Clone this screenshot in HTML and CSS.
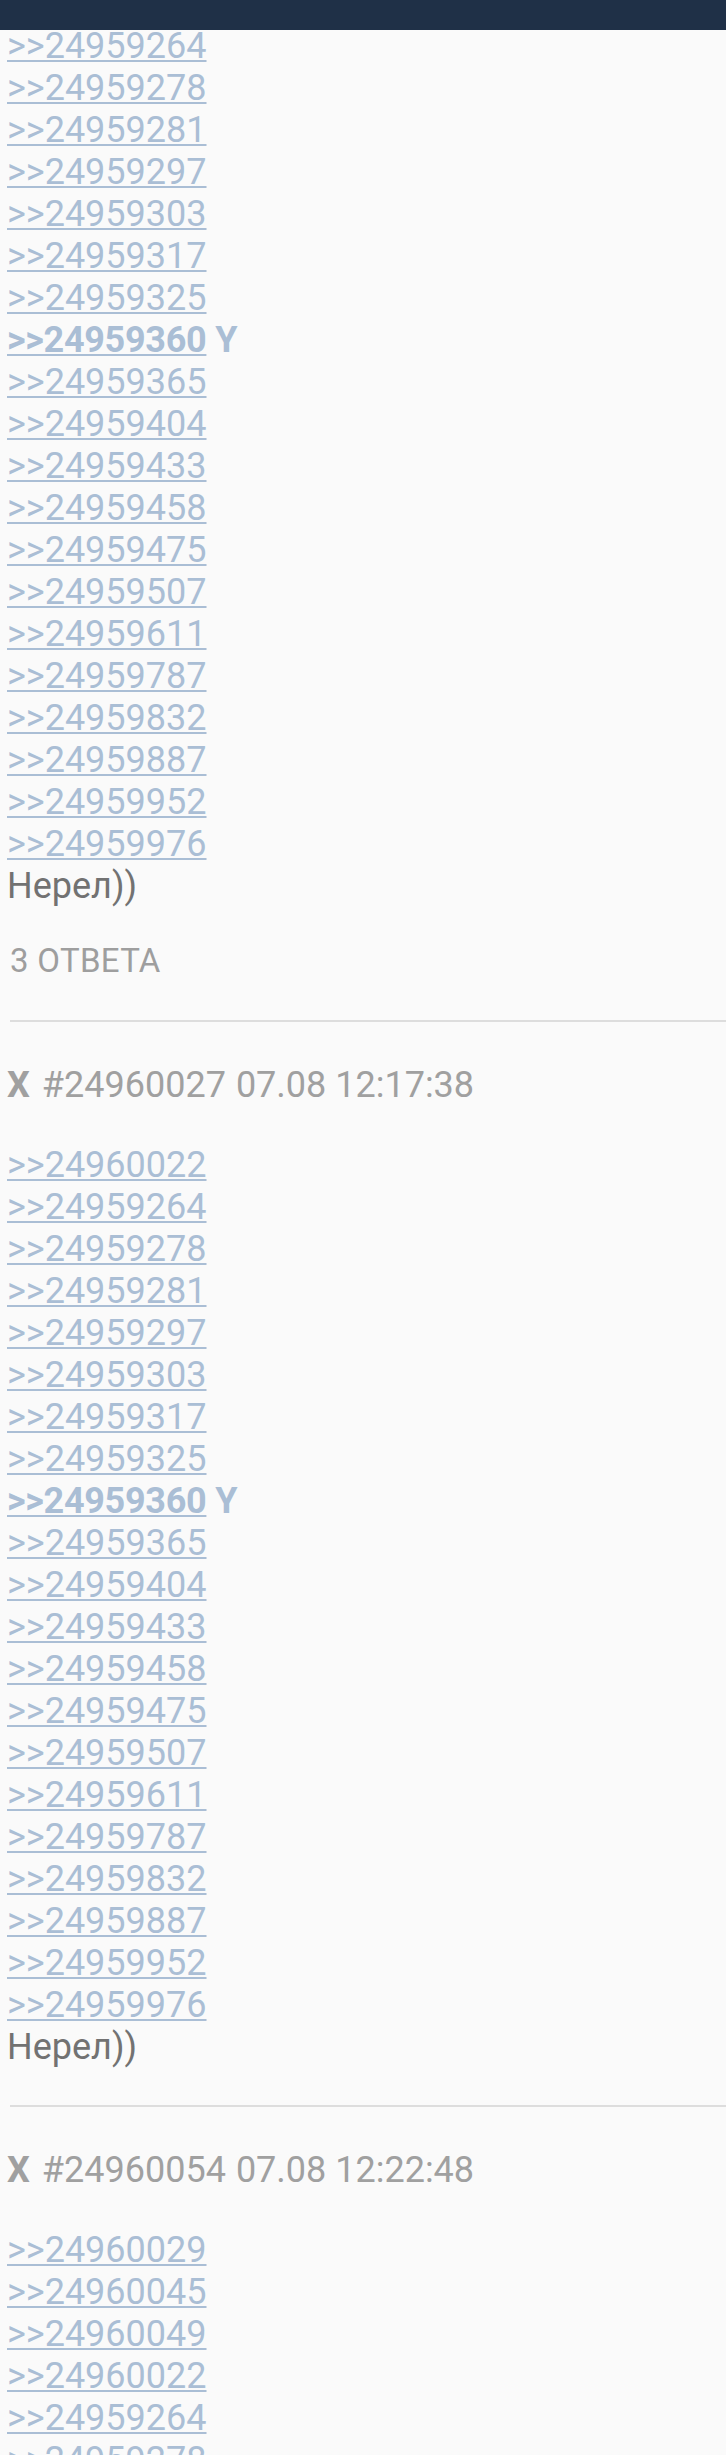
FILE: index.html
```html
<!DOCTYPE html>
<html lang="ru">
<head>
<meta charset="utf-8">
<title>Thread</title>
<link rel="stylesheet" href="styles.css">
</head>
<body>
<div class="topbar"></div>
<main class="thread">
  <section class="post">
    <div class="post-body">
      <div class="line"><a class="ref" href="#">&gt;&gt;24959264</a></div>
      <div class="line"><a class="ref" href="#">&gt;&gt;24959278</a></div>
      <div class="line"><a class="ref" href="#">&gt;&gt;24959281</a></div>
      <div class="line"><a class="ref" href="#">&gt;&gt;24959297</a></div>
      <div class="line"><a class="ref" href="#">&gt;&gt;24959303</a></div>
      <div class="line"><a class="ref" href="#">&gt;&gt;24959317</a></div>
      <div class="line"><a class="ref" href="#">&gt;&gt;24959325</a></div>
      <div class="line"><a class="ref ref-own" href="#">&gt;&gt;24959360</a><span class="own"> Y</span></div>
      <div class="line"><a class="ref" href="#">&gt;&gt;24959365</a></div>
      <div class="line"><a class="ref" href="#">&gt;&gt;24959404</a></div>
      <div class="line"><a class="ref" href="#">&gt;&gt;24959433</a></div>
      <div class="line"><a class="ref" href="#">&gt;&gt;24959458</a></div>
      <div class="line"><a class="ref" href="#">&gt;&gt;24959475</a></div>
      <div class="line"><a class="ref" href="#">&gt;&gt;24959507</a></div>
      <div class="line"><a class="ref" href="#">&gt;&gt;24959611</a></div>
      <div class="line"><a class="ref" href="#">&gt;&gt;24959787</a></div>
      <div class="line"><a class="ref" href="#">&gt;&gt;24959832</a></div>
      <div class="line"><a class="ref" href="#">&gt;&gt;24959887</a></div>
      <div class="line"><a class="ref" href="#">&gt;&gt;24959952</a></div>
      <div class="line"><a class="ref" href="#">&gt;&gt;24959976</a></div>
      <div class="line text">Нерел))</div>
    </div>
    <div class="replies">3 ОТВЕТА</div>
  </section>
  <div class="divider"></div>
  <section class="post">
    <div class="post-head"><span class="name">X</span><span class="num">#24960027</span><span class="date">07.08 12:17:38</span></div>
    <div class="post-body">
      <div class="line"><a class="ref" href="#">&gt;&gt;24960022</a></div>
      <div class="line"><a class="ref" href="#">&gt;&gt;24959264</a></div>
      <div class="line"><a class="ref" href="#">&gt;&gt;24959278</a></div>
      <div class="line"><a class="ref" href="#">&gt;&gt;24959281</a></div>
      <div class="line"><a class="ref" href="#">&gt;&gt;24959297</a></div>
      <div class="line"><a class="ref" href="#">&gt;&gt;24959303</a></div>
      <div class="line"><a class="ref" href="#">&gt;&gt;24959317</a></div>
      <div class="line"><a class="ref" href="#">&gt;&gt;24959325</a></div>
      <div class="line"><a class="ref ref-own" href="#">&gt;&gt;24959360</a><span class="own"> Y</span></div>
      <div class="line"><a class="ref" href="#">&gt;&gt;24959365</a></div>
      <div class="line"><a class="ref" href="#">&gt;&gt;24959404</a></div>
      <div class="line"><a class="ref" href="#">&gt;&gt;24959433</a></div>
      <div class="line"><a class="ref" href="#">&gt;&gt;24959458</a></div>
      <div class="line"><a class="ref" href="#">&gt;&gt;24959475</a></div>
      <div class="line"><a class="ref" href="#">&gt;&gt;24959507</a></div>
      <div class="line"><a class="ref" href="#">&gt;&gt;24959611</a></div>
      <div class="line"><a class="ref" href="#">&gt;&gt;24959787</a></div>
      <div class="line"><a class="ref" href="#">&gt;&gt;24959832</a></div>
      <div class="line"><a class="ref" href="#">&gt;&gt;24959887</a></div>
      <div class="line"><a class="ref" href="#">&gt;&gt;24959952</a></div>
      <div class="line"><a class="ref" href="#">&gt;&gt;24959976</a></div>
      <div class="line text">Нерел))</div>
    </div>
  </section>
  <div class="divider"></div>
  <section class="post">
    <div class="post-head"><span class="name">X</span><span class="num">#24960054</span><span class="date">07.08 12:22:48</span></div>
    <div class="post-body">
      <div class="line"><a class="ref" href="#">&gt;&gt;24960029</a></div>
      <div class="line"><a class="ref" href="#">&gt;&gt;24960045</a></div>
      <div class="line"><a class="ref" href="#">&gt;&gt;24960049</a></div>
      <div class="line"><a class="ref" href="#">&gt;&gt;24960022</a></div>
      <div class="line"><a class="ref" href="#">&gt;&gt;24959264</a></div>
      <div class="line"><a class="ref" href="#">&gt;&gt;24959278</a></div>
      <div class="line"><a class="ref" href="#">&gt;&gt;24959281</a></div>
    </div>
  </section>
</main>
</body>
</html>
```
FILE: styles.css
```css
html, body {
  margin: 0;
  padding: 0;
}
body {
  background: #fafafa;
  font-family: Roboto, "Noto Sans", sans-serif;
  overflow: hidden;
}
.topbar {
  position: fixed;
  top: 0;
  left: 0;
  right: 0;
  height: 30px;
  background: #1f3047;
  z-index: 2;
}
.thread {
  padding-top: 25px;
}
.post {
  padding-left: 7px;
  padding-bottom: 37px;
}
.post-body .line {
  font-size: 36px;
  line-height: 42px;
  white-space: nowrap;
}
.ref {
  color: #aabed5;
  text-decoration: underline;
  text-decoration-thickness: 2px;
  text-underline-offset: 2px;
}
.ref-own,
.own {
  font-weight: bold;
}
.ref-own {
  letter-spacing: -0.3px;
}
.own {
  color: #aabed5;
}
.text {
  color: #727272;
}
.replies {
  margin-top: 34px;
  margin-bottom: 2px;
  padding-left: 3px;
  font-size: 33px;
  line-height: 40px;
  letter-spacing: 0.3px;
  color: #9e9e9e;
}
.divider {
  height: 2px;
  margin-left: 10px;
  background: #dddddd;
}
.post-head {
  display: flex;
  gap: 10px;
  margin-top: 42px;
  margin-bottom: 38px;
  font-size: 36px;
  line-height: 42px;
  color: #a0a0a0;
  white-space: nowrap;
}
.post-head .name {
  font-weight: bold;
  margin-right: 2px;
}
```
